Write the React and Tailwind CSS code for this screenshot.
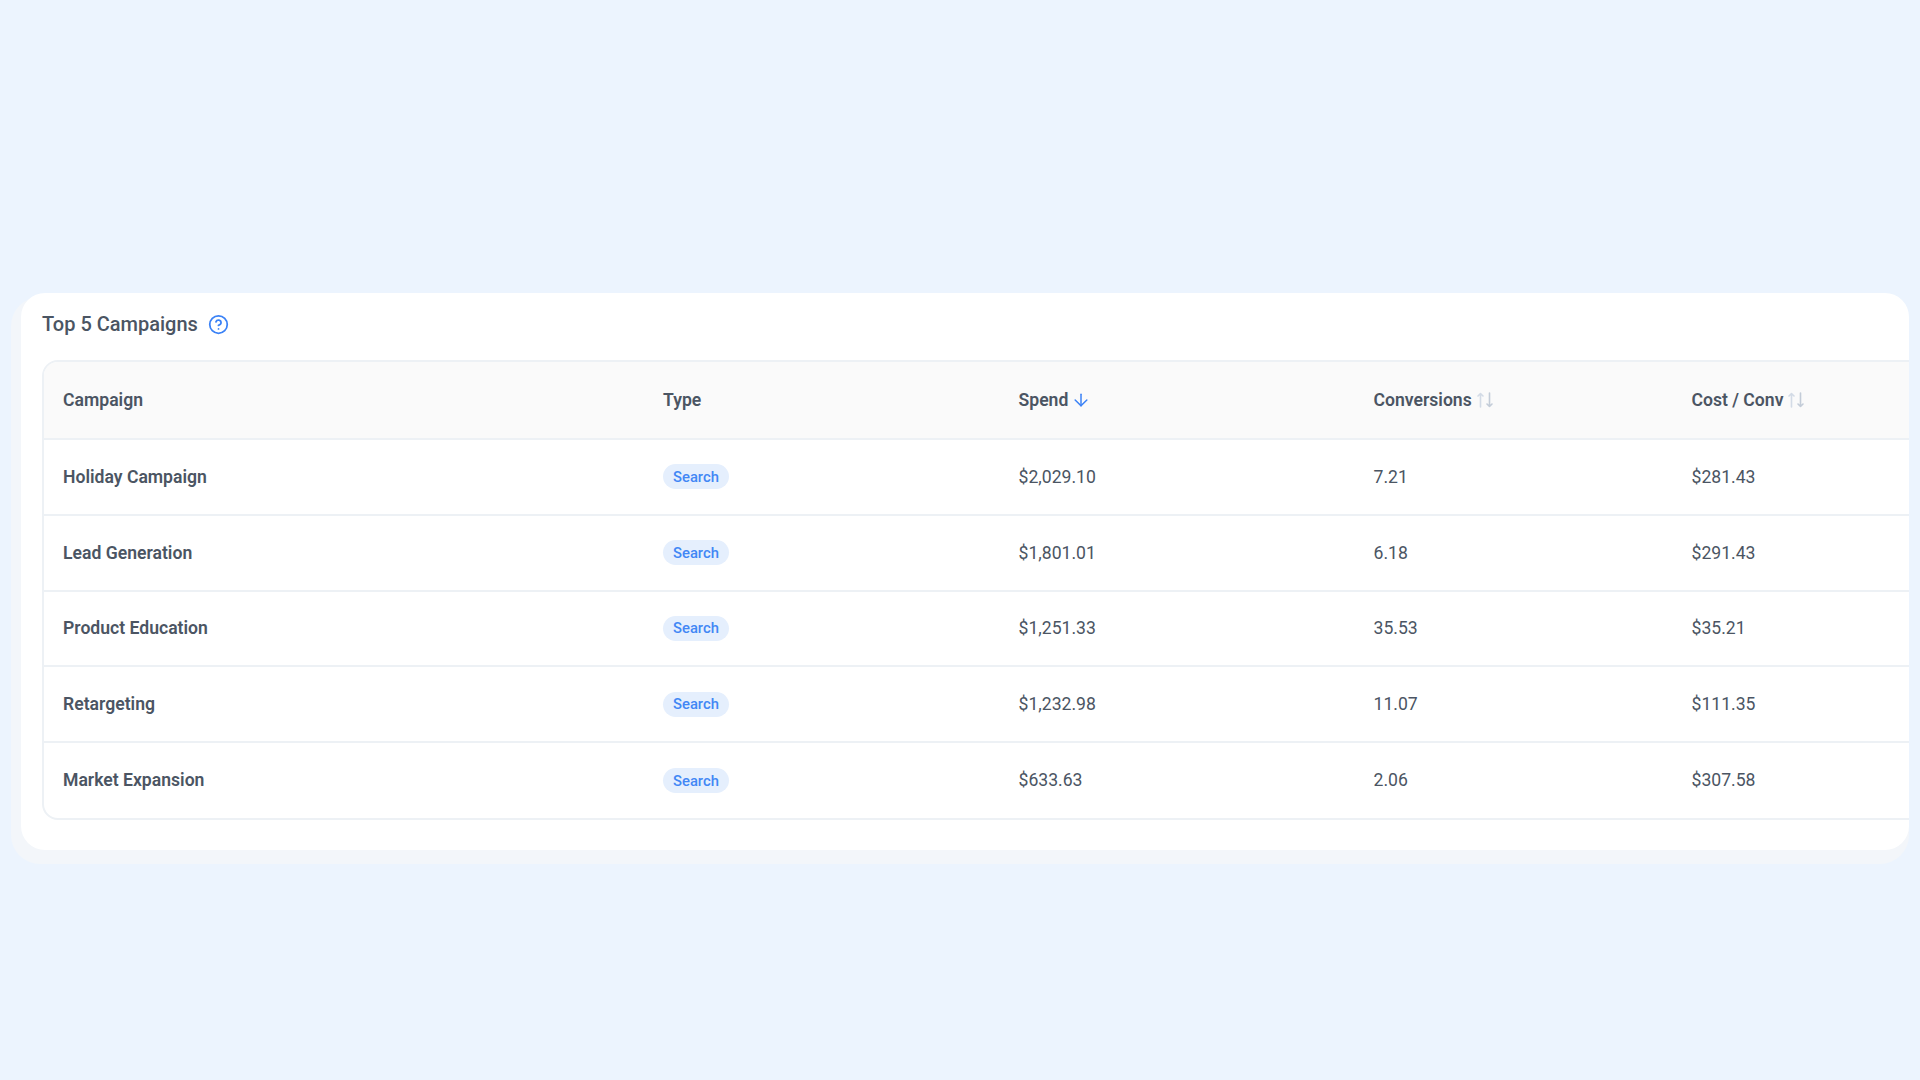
import React from 'react';
import { ArrowDown, CircleHelp } from 'lucide-react';

const rows = [
  { name: 'Holiday Campaign', spend: '$2,029.10', conv: '7.21', cost: '$281.43' },
  { name: 'Lead Generation', spend: '$1,801.01', conv: '6.18', cost: '$291.43' },
  { name: 'Product Education', spend: '$1,251.33', conv: '35.53', cost: '$35.21' },
  { name: 'Retargeting', spend: '$1,232.98', conv: '11.07', cost: '$111.35' },
  { name: 'Market Expansion', spend: '$633.63', conv: '2.06', cost: '$307.58' },
];

const cols = 'grid grid-cols-[600px_355.5px_355px_318px_260px]';

function SortIcon() {
  return (
    <svg width="16" height="16" viewBox="0 0 16 16" fill="none" strokeWidth="1.6" strokeLinecap="round" strokeLinejoin="round">
      <path d="M3.5 15V1.5M1 4 3.5 1.5 6 4" stroke="#d3dbe6" />
      <path d="M12.5 1v13.5M10 12l2.5 2.5L15 12" stroke="#c3ccd8" />
    </svg>
  );
}

export default function App() {
  return (
    <div className="min-h-screen bg-[#ecf4fe] pt-[293px] pl-[21px] pr-[11px] font-['Roboto',sans-serif]">
      <div className="h-[557px] rounded-[24px] bg-white pl-[21px] pt-[17px] overflow-hidden shadow-[-5px_9px_0_5px_#f3f6fa]">
        <div className="flex items-center gap-[10px] h-[28px]">
          <h2 className="text-[20px] font-medium text-[#4b5563] leading-none">Top 5 Campaigns</h2>
          <CircleHelp className="w-[21px] h-[21px] text-[#3b82f6]" strokeWidth={2} />
        </div>
        <div className="mt-[22px] w-[1889px] rounded-[16px] border-2 border-[#edf1f5] overflow-hidden">
          <div className={`${cols} h-[78px] items-center bg-[#fafafa] border-b-2 border-[#edf1f5] pl-[19px] text-[17.6px] font-semibold text-[#4b5563]`}>
            <div>Campaign</div>
            <div>Type</div>
            <div className="flex items-center gap-[3px]">
              Spend
              <ArrowDown className="w-[20px] h-[20px] text-[#3b82f6]" strokeWidth={1.8} />
            </div>
            <div className="flex items-center gap-[5px]">
              Conversions
              <SortIcon />
            </div>
            <div className="flex items-center gap-[5px]">
              Cost / Conv
              <SortIcon />
            </div>
          </div>
          {rows.map((r, i) => (
            <div
              key={r.name}
              className={`${cols} items-center pl-[19px] text-[17.6px] text-[#4b5563] ${i < rows.length - 1 ? 'h-[75.8px] border-b-2 border-[#edf1f5]' : 'h-[75px]'}`}
            >
              <div className="font-semibold">{r.name}</div>
              <div className="flex">
                <span className="flex items-center h-[25px] px-[10px] rounded-full bg-[#e5effd] text-[14.8px] font-medium text-[#4287f5]">Search</span>
              </div>
              <div>{r.spend}</div>
              <div>{r.conv}</div>
              <div>{r.cost}</div>
            </div>
          ))}
        </div>
      </div>
    </div>
  );
}
